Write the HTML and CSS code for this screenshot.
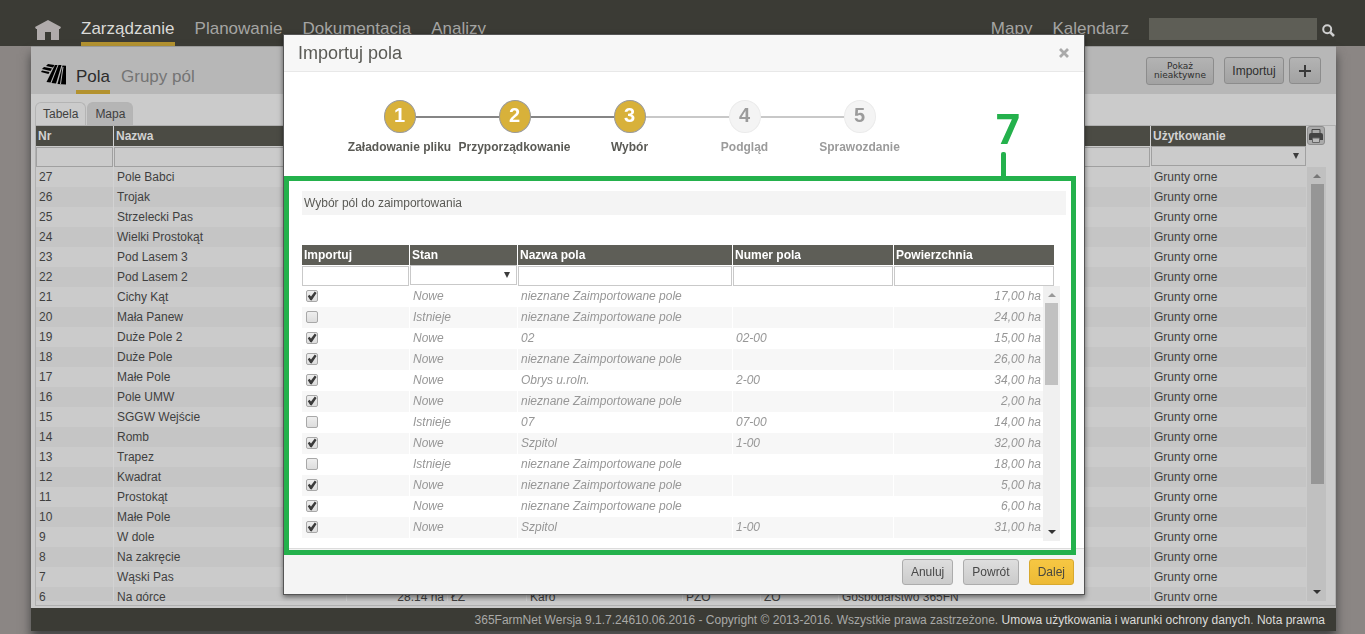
FILE: index.html
```html
<!DOCTYPE html>
<html lang="pl">
<head>
<meta charset="utf-8">
<title>365FarmNet</title>
<link rel="stylesheet" href="styles.css">
</head>
<body>
<header class="topbar">
  <a class="home" href="#" aria-label="Start"><svg width="26" height="20" viewBox="0 0 26 20"><path d="M13 0 0 7l1 2h1v11h8v-8h6v8h8V9h1l1-2z" fill="#b0abab"/></svg></a>
  <nav class="menu">
    <a class="active" href="#">Zarządzanie</a>
    <a href="#">Planowanie</a>
    <a href="#">Dokumentacja</a>
    <a href="#">Analizy</a>
  </nav>
  <nav class="menu menu-right">
    <a href="#">Mapy</a>
    <a href="#">Kalendarz</a>
  </nav>
  <input class="search" type="text" aria-label="Szukaj">
  <button class="search-button" aria-label="Szukaj"><svg width="13" height="13" viewBox="0 0 13 13" fill="none" stroke="#cfcfcf"><circle cx="5.2" cy="5.2" r="4" stroke-width="2"/><path d="m8.3 8.3 3.7 3.7" stroke-width="2.6"/></svg></button>
</header>

<main class="page">
  <div class="page-head">
    <svg class="logo" width="26" height="21" viewBox="0 0 26 21"><path d="M7 0 13.500 1 12 3.500 5 2zM3 3l8 1.500-1.500 2.500L1 5zM1 6.500l7.500 1.500-1 2L0 8zM14 1l2.500 0L9.500 18.500l-4-.5zM17.500 1h3L15 19.500l-4.500-.5zM21.500 1.500l3.500 .3V20.500l-8.500-.5zM20 14l-.800 6" /><path d="M22 3 19.500 20" stroke="#b7b7b7"/></svg>
    <nav class="subnav">
      <a class="active" href="#">Pola</a>
      <a href="#">Grupy pól</a>
    </nav>
    <div class="page-actions">
      <button class="btn btn-small">Pokaż<br>nieaktywne</button>
      <button class="btn btn-import">Importuj</button>
      <button class="btn btn-plus" aria-label="Dodaj"><svg width="12" height="12" viewBox="0 0 12 12"><path d="M5 0h2v5h5v2H7v5H5V7H0V5h5z" fill="#3a3a3a"/></svg></button>
    </div>
  </div>
  <div class="tabs">
    <button class="tab tab-active">Tabela</button>
    <button class="tab">Mapa</button>
  </div>
  <div class="list">
    <div class="list-table">
      <table class="grid fields">
        <colgroup><col class="f-nr"><col class="f-name"><col class="f-area"><col class="f-lz"><col class="f-crop"><col class="f-code"><col class="f-code"><col><col class="f-use"></colgroup>
        <thead>
          <tr><th>Nr</th><th>Nazwa</th><th colspan="6"></th><th>Użytkowanie</th></tr>
          <tr class="filters"><td><input type="text" aria-label="Nr"></td><td><input type="text" aria-label="Nazwa"></td><td colspan="6"><input type="text" aria-label="Filtr"></td><td><span class="drop"><select aria-label="Użytkowanie"><option></option></select></span></td></tr>
        </thead>
        <tbody>
          <tr><td>27</td><td>Pole Babci</td><td colspan="6"></td><td>Grunty orne</td></tr>
          <tr><td>26</td><td>Trojak</td><td colspan="6"></td><td>Grunty orne</td></tr>
          <tr><td>25</td><td>Strzelecki Pas</td><td colspan="6"></td><td>Grunty orne</td></tr>
          <tr><td>24</td><td>Wielki Prostokąt</td><td colspan="6"></td><td>Grunty orne</td></tr>
          <tr><td>23</td><td>Pod Lasem 3</td><td colspan="6"></td><td>Grunty orne</td></tr>
          <tr><td>22</td><td>Pod Lasem 2</td><td colspan="6"></td><td>Grunty orne</td></tr>
          <tr><td>21</td><td>Cichy Kąt</td><td colspan="6"></td><td>Grunty orne</td></tr>
          <tr><td>20</td><td>Mała Panew</td><td colspan="6"></td><td>Grunty orne</td></tr>
          <tr><td>19</td><td>Duże Pole 2</td><td colspan="6"></td><td>Grunty orne</td></tr>
          <tr><td>18</td><td>Duże Pole</td><td colspan="6"></td><td>Grunty orne</td></tr>
          <tr><td>17</td><td>Małe Pole</td><td colspan="6"></td><td>Grunty orne</td></tr>
          <tr><td>16</td><td>Pole UMW</td><td colspan="6"></td><td>Grunty orne</td></tr>
          <tr><td>15</td><td>SGGW Wejście</td><td colspan="6"></td><td>Grunty orne</td></tr>
          <tr><td>14</td><td>Romb</td><td colspan="6"></td><td>Grunty orne</td></tr>
          <tr><td>13</td><td>Trapez</td><td colspan="6"></td><td>Grunty orne</td></tr>
          <tr><td>12</td><td>Kwadrat</td><td colspan="6"></td><td>Grunty orne</td></tr>
          <tr><td>11</td><td>Prostokąt</td><td colspan="6"></td><td>Grunty orne</td></tr>
          <tr><td>10</td><td>Małe Pole</td><td colspan="6"></td><td>Grunty orne</td></tr>
          <tr><td>9</td><td>W dole</td><td colspan="6"></td><td>Grunty orne</td></tr>
          <tr><td>8</td><td>Na zakręcie</td><td colspan="6"></td><td>Grunty orne</td></tr>
          <tr><td>7</td><td>Wąski Pas</td><td colspan="6"></td><td>Grunty orne</td></tr>
          <tr><td>6</td><td>Na górce</td><td class="num">28.14 ha</td><td>ŁZ</td><td>Karo</td><td>PZO</td><td>ZO</td><td>Gospodarstwo 365FN</td><td>Grunty orne</td></tr>
        </tbody>
      </table>
    </div>
    <div class="list-side">
      <button class="print" aria-label="Drukuj"><svg width="14" height="14" viewBox="0 0 14 14"><path d="M3 .500h8v4H3z" fill="#aaa" stroke="#444"/><path d="M0 6q0-2 2-2h10q2 0 2 2v5H0z" fill="#444"/><path d="M3.500 9h7v4.500h-7z" fill="#bbb" stroke="#666"/></svg></button>
      <div class="scroll scroll-main"><span class="up"></span><span class="thumb"></span><span class="down"></span></div>
    </div>
  </div>
  <footer class="page-foot">365FarmNet Wersja 9.1.7.24610.06.2016 - Copyright © 2013-2016. Wszystkie prawa zastrzeżone. <a href="#">Umowa użytkowania i warunki ochrony danych</a>. <a href="#">Nota prawna</a></footer>
</main>

<div class="overlay">
  <section class="dialog" role="dialog" aria-labelledby="dialog-title">
    <header class="dialog-head">
      <h1 id="dialog-title">Importuj pola</h1>
      <button class="close" aria-label="Zamknij"><svg width="10" height="10" viewBox="0 0 10 10"><path d="m1 1 8 8M9 1 1 9" stroke="#aaa" stroke-width="2.800"/></svg></button>
    </header>
    <ol class="steps">
      <li class="done"><b>1</b><span>Załadowanie pliku</span></li>
      <li class="done"><b>2</b><span>Przyporządkowanie</span></li>
      <li class="done"><b>3</b><span>Wybór</span></li>
      <li><b>4</b><span>Podgląd</span></li>
      <li><b>5</b><span>Sprawozdanie</span></li>
    </ol>
    <div class="dialog-body">
      <h2>Wybór pól do zaimportowania</h2>
      <div class="import">
        <table class="grid import-table">
          <colgroup><col class="i-check"><col class="i-state"><col><col class="i-number"><col class="i-area"></colgroup>
          <thead>
            <tr><th>Importuj</th><th>Stan</th><th>Nazwa pola</th><th>Numer pola</th><th>Powierzchnia</th></tr>
            <tr class="filters"><td><input type="text" aria-label="Importuj"></td><td><span class="drop"><select aria-label="Stan"><option></option></select></span></td><td><input type="text" aria-label="Nazwa pola"></td><td><input type="text" aria-label="Numer pola"></td><td><input type="text" aria-label="Powierzchnia"></td></tr>
          </thead>
          <tbody>
            <tr><td><input type="checkbox" aria-label="Importuj" checked></td><td>Nowe</td><td>nieznane Zaimportowane pole</td><td></td><td class="num">17,00 ha</td></tr>
            <tr><td><input type="checkbox" aria-label="Importuj"></td><td>Istnieje</td><td>nieznane Zaimportowane pole</td><td></td><td class="num">24,00 ha</td></tr>
            <tr><td><input type="checkbox" aria-label="Importuj" checked></td><td>Nowe</td><td>02</td><td>02-00</td><td class="num">15,00 ha</td></tr>
            <tr><td><input type="checkbox" aria-label="Importuj" checked></td><td>Nowe</td><td>nieznane Zaimportowane pole</td><td></td><td class="num">26,00 ha</td></tr>
            <tr><td><input type="checkbox" aria-label="Importuj" checked></td><td>Nowe</td><td>Obrys u.roln.</td><td>2-00</td><td class="num">34,00 ha</td></tr>
            <tr><td><input type="checkbox" aria-label="Importuj" checked></td><td>Nowe</td><td>nieznane Zaimportowane pole</td><td></td><td class="num">2,00 ha</td></tr>
            <tr><td><input type="checkbox" aria-label="Importuj"></td><td>Istnieje</td><td>07</td><td>07-00</td><td class="num">14,00 ha</td></tr>
            <tr><td><input type="checkbox" aria-label="Importuj" checked></td><td>Nowe</td><td>Szpitol</td><td>1-00</td><td class="num">32,00 ha</td></tr>
            <tr><td><input type="checkbox" aria-label="Importuj"></td><td>Istnieje</td><td>nieznane Zaimportowane pole</td><td></td><td class="num">18,00 ha</td></tr>
            <tr><td><input type="checkbox" aria-label="Importuj" checked></td><td>Nowe</td><td>nieznane Zaimportowane pole</td><td></td><td class="num">5,00 ha</td></tr>
            <tr><td><input type="checkbox" aria-label="Importuj" checked></td><td>Nowe</td><td>nieznane Zaimportowane pole</td><td></td><td class="num">6,00 ha</td></tr>
            <tr><td><input type="checkbox" aria-label="Importuj" checked></td><td>Nowe</td><td>Szpitol</td><td>1-00</td><td class="num">31,00 ha</td></tr>
          </tbody>
        </table>
        <div class="scroll scroll-import"><span class="up"></span><span class="thumb"></span><span class="down"></span></div>
      </div>
    </div>
    <footer class="dialog-foot">
      <button class="btn btn-light">Anuluj</button>
      <button class="btn btn-light">Powrót</button>
      <button class="btn btn-primary">Dalej</button>
    </footer>
    <div class="callout"><span class="callout-number">7</span></div>
  </section>
</div>
</body>
</html>
```
FILE: styles.css
```css
* { box-sizing: border-box; }
body {
  margin: 0;
  height: 100vh;
  display: flex;
  flex-direction: column;
  overflow: hidden;
  background: #8b8684;
  color: #3f3f3f;
  font: 12px/20px "Liberation Sans", Arial, sans-serif;
}
a { color: inherit; text-decoration: none; }
button, input, select { font: inherit; color: inherit; margin: 0; padding: 0; }
button { cursor: pointer; }
svg { display: block; }

.topbar {
  flex: none;
  display: flex;
  height: 46px;
  padding: 0 30px 0 35px;
  background: #3b3b35;
}
.home { margin: 20px 20px 0 0; }
.menu, .subnav {
  display: flex;
  gap: 20px;
  font-size: 17px;
}
.menu { color: #a5a5a3; }
.menu a { padding-top: 19px; }
.menu .active { color: #dadad8; border-bottom: 4px solid #b3922f; }
.menu-right { margin-left: auto; }
.search {
  width: 168px;
  height: 22px;
  margin: 18px 5px 0 20px;
  border: 0;
  background: #5e5e56;
}
.search-button { align-self: flex-start; margin-top: 24px; border: 0; background: none; }

.page {
  position: relative;
  flex: 1;
  min-height: 0;
  display: flex;
  flex-direction: column;
  margin: 0 29px 3px 31px;
  border-top: 1px solid #9a9a9a;
  background: #cbcbcb;
  box-shadow: 0 8px 10px #444;
}
.page-head {
  flex: none;
  display: flex;
  height: 47px;
  padding: 0 15px 0 10px;
  background: #b7b7b7;
}
.logo { margin: 17px 9px 0 0; }
.subnav { gap: 11px; color: #747474; }
.subnav a { padding-top: 20px; }
.subnav .active { color: #2c2c2c; border-bottom: 4px solid #b3922f; }
.page-actions { display: flex; gap: 10px; align-items: flex-start; margin-left: auto; padding-top: 10px; }
.btn {
  height: 27px;
  padding: 0 7px;
  border: 1px solid #8c8c8c;
  border-radius: 3px;
  background: linear-gradient(#b3b3b3, #a2a2a2);
  color: #2f2f2f;
}
.btn-small { height: 28px; width: 68px; padding: 0; font: 9px/9px "DejaVu Sans", sans-serif; }
.btn-import { width: 60px; padding: 0; }
.btn-plus { width: 32px; padding: 0 9px; margin-left: -5px; }

.tabs { flex: none; display: flex; gap: 1px; padding: 8px 4px 0; }
.tab {
  height: 23px;
  padding: 0 7px;
  border: 1px solid #b4b4b4;
  border-bottom: 0;
  border-radius: 6px 6px 0 0;
  background: #b5b5b5;
}
.tab-active { background: #cbcbcb; }

.list {
  flex: 1;
  min-height: 0;
  display: flex;
  gap: 1px;
  margin: 0 0 2px 4px;
  padding-bottom: 4px;
  border: 1px solid #b0b0b0;
}
.list-table { flex: 1; min-width: 0; overflow: hidden; }
.grid { width: 100%; table-layout: fixed; border-collapse: separate; border-spacing: 0; }
.grid th, .grid td { height: 20px; padding: 0 3px; text-align: left; white-space: nowrap; border-right: 1px solid #d2d2d2; }
.grid th { padding: 0 2px; background: #4b4b44; color: #d2d2d2; }
.grid th:last-child, .grid td:last-child { border-right: 0; }
.grid .filters td { height: 21px; padding: 0; background: none; vertical-align: top; }
.grid .filters input, .grid select {
  display: block;
  width: 100%;
  height: 20px;
  margin-top: 1px;
  border: 1px solid #a0a0a0;
  border-radius: 0;
  background: transparent;
  appearance: none;
}
.grid select { margin-top: 0; }
.drop { position: relative; display: block; }
.drop::after {
  content: "";
  position: absolute;
  right: 7px;
  top: 7px;
  border: 3px solid transparent;
  border-top: 6px solid #3c3c3c;
  border-bottom: 0;
}
.grid .num { text-align: right; }
.fields tbody tr:nth-child(even) { background: #c5c5c5; }
.f-nr { width: 78px; }
.f-name { width: 233px; }
.f-area { width: 101px; }
.f-lz { width: 79px; }
.f-crop { width: 156px; }
.f-code { width: 78px; }
.f-use { width: 155px; }

.list-side { flex: none; display: flex; flex-direction: column; width: 28px; }
.print {
  flex: none;
  width: 18px;
  height: 19px;
  margin-bottom: 22px;
  padding: 1px;
  border: 1px solid #8c8c8c;
  border-radius: 3px;
  background: #aaa;
}
.scroll { display: flex; flex-direction: column; }
.scroll .up, .scroll .down { width: 0; border: 4px solid transparent; }
.scroll .up { border-top: 0; border-bottom-color: #777; margin: 7px auto 6px; }
.scroll .down { border-bottom: 0; border-top-color: #333; margin: auto auto 7px; }
.scroll-main { flex: 1; width: 19px; background: #c0c0c0; }
.scroll-main .thumb { height: 300px; width: 13px; margin: 0 auto 0 4px; background: #969696; }

.page-foot {
  flex: none;
  height: 23px;
  padding-right: 11px;
  line-height: 24px;
  background: #3b3b35;
  color: #a9a9a7;
  text-align: right;
  white-space: nowrap;
}
.page-foot a { color: #dcdcda; }

.overlay { position: fixed; inset: 0; display: flex; justify-content: center; align-items: flex-start; padding: 34px 0 0 3px; }
.dialog {
  position: relative;
  width: 802px;
  border: 1px solid #555;
  background: #fff;
  color: #5a5a55;
  box-shadow: 0 2px 5px rgba(0, 0, 0, .5);
}
.dialog-head {
  display: flex;
  justify-content: space-between;
  align-items: center;
  height: 37px;
  padding: 0 15px 0 14px;
  border-bottom: 1px solid #e8e8e8;
  background: #f7f7f7;
}
.dialog-head h1 { margin: 0; font-size: 18px; font-weight: normal; }
.close { border: 0; background: none; }
.steps {
  display: grid;
  grid-template-columns: repeat(5, 115px);
  justify-content: start;
  margin: 0;
  padding: 28px 58px 0;
  list-style: none;
  text-align: center;
  font-weight: bold;
}
.steps li { position: relative; color: #9b9b9b; }
.steps li + li::before {
  content: "";
  position: absolute;
  top: 16px;
  right: 73px;
  width: 83px;
  height: 2px;
  background: #c8c8c8;
}
.steps .done + .done::before { background: #858585; }
.steps b {
  display: block;
  width: 32px;
  height: 33px;
  margin: 0 auto 4px;
  border: 1px solid #ebebeb;
  border-radius: 50%;
  background: #f4f4f4;
  font-size: 20px;
  line-height: 28px;
}
.steps .done { color: #5a5a55; }
.steps .done b { border-color: #999; background: #d8b13a; color: #fff; }
.steps span { white-space: nowrap; }

.dialog-body { padding: 34px 18px 7px; }
.dialog-body h2 { height: 24px; margin: 0; padding: 0 2px; font-size: 12px; font-weight: normal; line-height: 24px; background: #f4f4f4; }
.import { position: relative; margin-top: 30px; padding: 0 12px 3px 0; }
.import-table th { background: #5e5e57; color: #fff; }
.import-table th, .import-table td { border-color: #fff; }
.import-table tbody { color: #979797; font-style: italic; }
.import-table tbody td { height: 21px; padding-bottom: 1px; }
.import-table tbody tr:nth-child(even) { background: #f7f7f7; }
.import-table td.num { padding-right: 13px; }
.grid.import-table .filters input, .import-table select { border-color: #c9c9c9; background: #fff; }
.i-check, .i-state { width: 108px; }
.i-number { width: 161px; }
.i-area { width: 160px; }
.import-table input[type="checkbox"] {
  display: block;
  width: 12px;
  height: 12px;
  margin-left: 1px;
  border: 1px solid #a8a8a8;
  border-radius: 2px;
  background: linear-gradient(#eee, #ddd);
  appearance: none;
}
.import-table input:checked::before {
  content: "";
  display: block;
  width: 10px;
  height: 10px;
  background: #3c3c3c;
  clip-path: polygon(8% 52%, 24% 38%, 40% 54%, 78% 6%, 96% 20%, 46% 94%, 32% 90%);
}
.scroll-import { position: absolute; top: 41px; right: 6px; bottom: 0; width: 17px; background: #f0f0f0; }
.scroll-import .up { border-bottom-color: #999; }
.scroll-import .thumb { height: 82px; width: 13px; margin: 0 auto; background: #c1c1c1; }

.dialog-foot {
  display: flex;
  justify-content: flex-end;
  gap: 10px;
  padding: 10px 10px 9px;
  border-top: 1px solid #dcdcdc;
  background: #f4f4f4;
}
.dialog-foot .btn { height: 26px; line-height: 24px; }
.btn-light { border-color: #acacac; background: linear-gradient(#dedede, #cbcbcb); color: #484848; }
.dialog-foot .btn-light { padding: 0 8px; }
.btn-primary { border-color: #d8a92e; background: linear-gradient(#f6c743, #edba35); color: #484840; }
.dialog-foot .btn-primary { padding: 0 8px; }

.callout {
  position: absolute;
  top: 141px;
  left: 0;
  right: 8px;
  height: 379px;
  border: 5px solid #24b14c;
  pointer-events: none;
}
.callout::before {
  content: "";
  position: absolute;
  top: -29px;
  right: 65px;
  width: 5px;
  height: 24px;
  border-radius: 2px 2px 0 0;
  background: #24b14c;
}
.callout-number {
  position: absolute;
  top: -74px;
  right: 51px;
  color: #24b14c;
  font: bold 42px/42px "Open Sans", sans-serif;
}
```
